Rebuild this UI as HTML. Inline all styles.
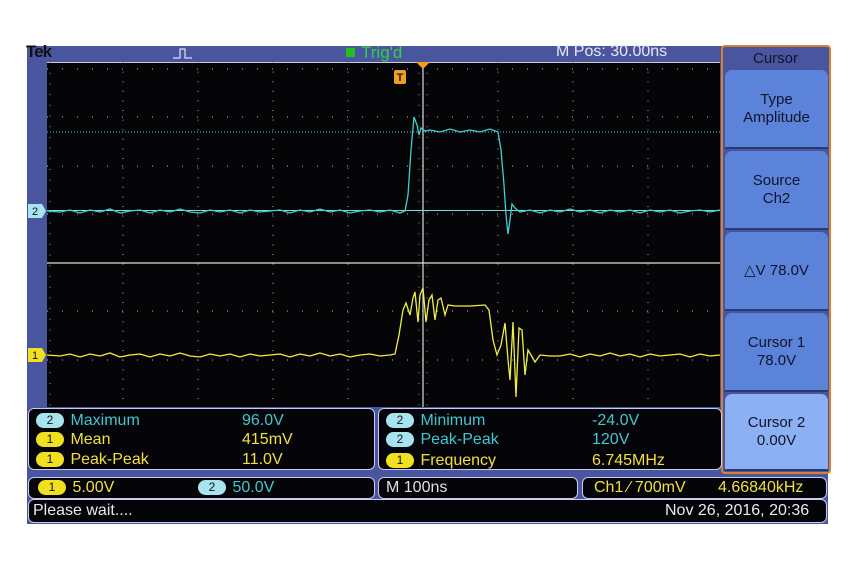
<!DOCTYPE html>
<html><head><style>
body{margin:0;width:855px;height:570px;background:#fff;position:relative;overflow:hidden;font-family:"Liberation Sans",sans-serif}
.a{position:absolute}
.btn{position:absolute;left:725px;width:103px;background:#5b83d9;border-radius:7px 7px 0 0;color:#10142a;font-size:15px;text-align:center;display:flex;align-items:center;justify-content:center;line-height:18px;border-bottom:2px solid #2a3a70}
.box{position:absolute;border:1px solid #c8ccee;border-radius:6px;background:#050408}
.pill{display:inline-block;width:28px;height:15px;border-radius:8px;text-align:center;font-size:12px;line-height:15px;color:#111;vertical-align:middle;margin-right:2px}
.c{background:#a8e4f0}.y{background:#f0e020}
.row{position:absolute;font-size:16px;height:19px;line-height:19px;white-space:nowrap}
</style></head><body>
<div class="a" style="left:27px;top:46px;width:801px;height:478px;background:#4a55a0"></div>
<div class="a" style="left:26px;top:42px;font-weight:bold;font-size:17px;color:#111;letter-spacing:-1px">Tek</div>
<svg class="a" style="left:170px;top:46px" width="30" height="14"><path d="M3 12H10V3H15V12H22" stroke="#fff" fill="none" stroke-width="1"/></svg>
<div class="a" style="left:346px;top:48px;width:9px;height:9px;background:#20c020"></div>
<div class="a" style="left:361px;top:43px;color:#30d040;font-size:17px">Trig'd</div>
<div class="a" style="left:556px;top:43px;color:#e8e8f0;font-size:16px">M Pos: 30.00ns</div>
<svg class="a" style="left:0;top:0" width="855" height="570">
<rect x="47" y="62" width="673" height="345" fill="#050407"/>
<line x1="47" y1="62.5" x2="720" y2="62.5" stroke="#ccc"/>
<g stroke="#999" stroke-width="1.2" stroke-dasharray="1 8.6" fill="none">
<path d="M123 62V407M198 62V407M273 62V407M348 62V407M498 62V407M573 62V407M648 62V407"/>
</g>
<g stroke="#999" stroke-width="1.2" stroke-dasharray="1 14" fill="none">
<path d="M47 69H720M47 117H720M47 166H720M47 214H720M47 311H720M47 360H720"/>
</g>
<g stroke="#999" stroke-width="1" stroke-dasharray="1 9.7" fill="none">
<path d="M50 62V407M419 62V407M427 62V407"/>
</g>
<line x1="423" y1="62" x2="423" y2="407" stroke="#ddd" stroke-width="1.2"/>
<line x1="47" y1="263" x2="720" y2="263" stroke="#ddd" stroke-width="1.2"/>
<line x1="47" y1="132" x2="720" y2="132" stroke="#5cc" stroke-dasharray="1 2"/>
<line x1="47" y1="210.5" x2="720" y2="210.5" stroke="#7dd" stroke-width="1"/>
<path d="M47 211L60 212 70 210 80 213 90 210 100 212 110 209 120 213 130 211 140 210 150 213 160 210 170 212 180 209 190 212 200 213 210 210 220 212 230 210 240 213 250 210 260 212 270 211 280 210 290 213 300 210 310 212 320 209 330 212 340 210 350 213 360 211 370 210 380 212 390 210 400 213 405 211 408 195 411 150 414 117 417 125 419 135 421 128 425 131 430 130 440 132 450 129 460 132 470 130 480 132 490 129 498 132 501 150 504 185 506 215 508 234 510 220 512 204 515 208 520 212 530 210 540 213 550 210 560 212 570 209 580 212 590 210 600 213 610 210 620 212 630 210 640 213 650 210 660 212 670 210 680 213 690 211 700 210 710 212 720 210" stroke="#40d0d0" stroke-width="1.3" fill="none"/>
<path d="M47 355L60 356 70 354 80 357 90 354 100 356 110 353 120 357 130 355 140 354 150 357 160 354 170 356 180 353 190 356 200 357 210 354 220 356 230 354 240 357 250 354 260 356 270 355 280 354 290 357 300 354 310 356 320 353 330 356 340 354 350 357 360 355 370 354 380 356 390 355 395 354 399 335 403 310 406 303 410 315 413 298 415 292 418 322 420 295 423 288 426 322 429 300 432 295 435 320 438 300 441 298 445 315 448 305 455 306 470 306 485 305 489 310 493 340 497 355 501 345 505 323 508 360 510 380 513 322 516 397 519 328 522 330 525 375 528 350 531 355 535 362 540 355 550 356 560 356 570 354 580 357 590 354 600 356 610 353 620 356 630 354 640 357 650 354 660 356 670 355 680 354 690 357 700 354 710 356 720 355" stroke="#f0f040" stroke-width="1.3" fill="none"/>
<path d="M416 62L430 62 423 69Z" fill="#f0a020"/>
<rect x="394" y="70" width="12" height="14" rx="2" fill="#f0a020"/>
<text x="400" y="81" font-size="11" text-anchor="middle" font-family="Liberation Sans" font-weight="bold" fill="#222">T</text>
<path d="M28 204H42L46 211 42 218H28Z" fill="#a8e4f0"/>
<text x="32" y="215" font-size="11" fill="#111" font-family="Liberation Sans">2</text>
<path d="M28 348H42L46 355 42 362H28Z" fill="#f0e020"/>
<text x="32" y="359" font-size="11" fill="#111" font-family="Liberation Sans">1</text>
</svg>
<div class="a" style="left:721px;top:45px;width:106px;height:425px;background:#4a55a0;border:2px solid #d8822a;border-radius:4px"></div>
<div class="a" style="left:723px;top:50px;width:105px;text-align:center;color:#10142a;font-size:15px">Cursor</div>
<div class="btn" style="top:70px;height:77px">Type<br>Amplitude</div>
<div class="btn" style="top:151px;height:77px">Source<br>Ch2</div>
<div class="btn" style="top:232px;height:77px">△V 78.0V</div>
<div class="btn" style="top:313px;height:77px">Cursor 1<br>78.0V</div>
<div class="btn" style="top:394px;height:75px;background:#8cb0f4">Cursor 2<br>0.00V</div>
<div class="box" style="left:28px;top:408px;width:345px;height:60px"></div>
<div class="box" style="left:378px;top:408px;width:342px;height:60px"></div>
<div class="row" style="left:36px;top:411px;color:#40c8d0"><span class="pill c">2</span> Maximum</div>
<div class="row" style="left:242px;top:411px;color:#40c8d0">96.0V</div>
<div class="row" style="left:36px;top:430px;color:#f0e040"><span class="pill y">1</span> Mean</div>
<div class="row" style="left:242px;top:430px;color:#f0e040">415mV</div>
<div class="row" style="left:36px;top:450px;color:#f0e040"><span class="pill y">1</span> Peak-Peak</div>
<div class="row" style="left:242px;top:450px;color:#f0e040">11.0V</div>
<div class="row" style="left:386px;top:411px;color:#40c8d0"><span class="pill c">2</span> Minimum</div>
<div class="row" style="left:592px;top:411px;color:#40c8d0">-24.0V</div>
<div class="row" style="left:386px;top:430px;color:#40c8d0"><span class="pill c">2</span> Peak-Peak</div>
<div class="row" style="left:592px;top:430px;color:#40c8d0">120V</div>
<div class="row" style="left:386px;top:451px;color:#f0e040"><span class="pill y">1</span> Frequency</div>
<div class="row" style="left:592px;top:451px;color:#f0e040">6.745MHz</div>
<div class="box" style="left:28px;top:477px;width:345px;height:20px"></div>
<div class="box" style="left:378px;top:477px;width:198px;height:20px"></div>
<div class="box" style="left:582px;top:477px;width:243px;height:20px"></div>
<div class="row" style="left:38px;top:478px;color:#f0e040"><span class="pill y">1</span> 5.00V</div>
<div class="row" style="left:198px;top:478px;color:#40c8d0"><span class="pill c">2</span> 50.0V</div>
<div class="row" style="left:386px;top:478px;color:#e0e0e8">M 100ns</div>
<div class="row" style="left:594px;top:478px;color:#f0e040">Ch1 ⁄ 700mV</div>
<div class="row" style="left:718px;top:478px;color:#f0e040">4.66840kHz</div>
<div class="box" style="left:28px;top:499px;width:797px;height:22px"></div>
<div class="row" style="left:33px;top:501px;color:#e8e8ee">Please wait....</div>
<div class="row" style="left:665px;top:501px;color:#e8e8ee">Nov 26, 2016, 20:36</div>
</body></html>
